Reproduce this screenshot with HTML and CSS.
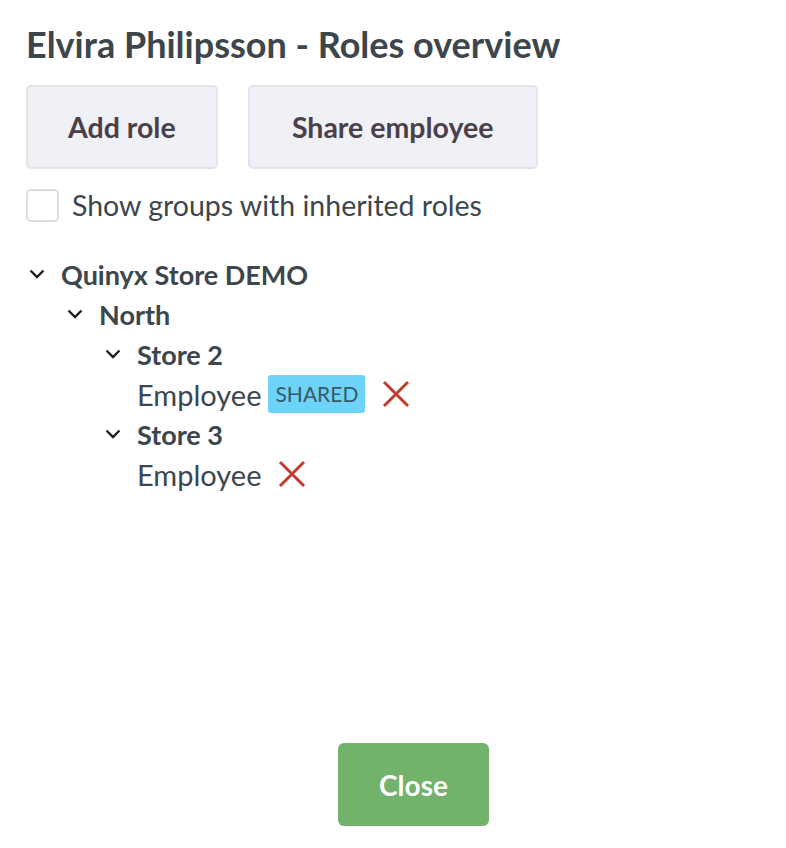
FILE: index.html
```html
<!DOCTYPE html>
<html lang="en">
<head>
    <meta charset="UTF-8">
    <title>Roles overview</title>
    <link rel="stylesheet" href="styles.css">
</head>
<body>
    <div class="page">
        <h1 class="title">Elvira Philipsson - Roles overview</h1>

        <div class="actions">
            <button class="btn">Add role</button>
            <button class="btn btn-share">Share employee</button>
        </div>

        <label class="check-row">
            <span class="checkbox"></span>
            <span>Show groups with inherited roles</span>
        </label>

        <ul class="tree">
            <li>
                <div class="node"><svg class="chev" viewBox="0 0 16 10"><path d="M1.5 1.5 L8 8 L14.5 1.5"/></svg>Quinyx Store DEMO</div>
                <ul>
                    <li>
                        <div class="node"><svg class="chev" viewBox="0 0 16 10"><path d="M1.5 1.5 L8 8 L14.5 1.5"/></svg>North</div>
                        <ul>
                            <li>
                                <div class="node"><svg class="chev" viewBox="0 0 16 10"><path d="M1.5 1.5 L8 8 L14.5 1.5"/></svg>Store 2</div>
                                <div class="role">Employee <span class="badge">SHARED</span>
                                    <svg class="remove" viewBox="0 0 28 28"><path d="M2 2 L26 26 M26 2 L2 26"/></svg>
                                </div>
                            </li>
                            <li>
                                <div class="node"><svg class="chev" viewBox="0 0 16 10"><path d="M1.5 1.5 L8 8 L14.5 1.5"/></svg>Store 3</div>
                                <div class="role">Employee
                                    <svg class="remove" viewBox="0 0 28 28"><path d="M2 2 L26 26 M26 2 L2 26"/></svg>
                                </div>
                            </li>
                        </ul>
                    </li>
                </ul>
            </li>
        </ul>

        <div class="footer">
            <button class="btn-close">Close</button>
        </div>
    </div>
</body>
</html>
```
FILE: styles.css
```css
body{
    margin: 0;
    font-family: Lato, "Open Sans", sans-serif;
    color: #3c464c;
}
.page{
    min-height: 848px;
    box-sizing: border-box;
    padding: 22px 0 22px 26px;
    display: flex;
    flex-direction: column;
}
.title{
    margin: 0;
    font-size: 36px;
    font-weight: 700;
    line-height: 44px;
}
.actions{
    display: flex;
    gap: 30px;
    margin-top: 19px;
}
.btn{
    height: 84px;
    padding: 0 40px;
    background: #f0f1f6;
    border: 2px solid #e3e4e8;
    border-radius: 5px;
    font-family: inherit;
    font-size: 28.5px;
    font-weight: 700;
    color: #4b4049;
}
.btn-share{
    min-width: 290px;
}
.check-row{
    display: flex;
    align-items: center;
    gap: 13px;
    margin-top: 19px;
    font-size: 28.5px;
}
.checkbox{
    width: 29px;
    height: 29px;
    border: 2px solid #dcdcdc;
    border-radius: 5px;
}
.tree, .tree ul{
    list-style: none;
    margin: 0;
    padding: 0;
}
.tree{
    margin-top: 32px;
}
.tree ul{
    padding-left: 38px;
}
.node, .role{
    height: 40px;
    display: flex;
    align-items: center;
}
.node{
    font-size: 27px;
    font-weight: 700;
}
.chev{
    width: 16px;
    height: 10px;
    margin: 0 16px 0 3px;
    fill: none;
    stroke: #1c1c1c;
    stroke-width: 2.4;
}
.role{
    padding-left: 35px;
    font-size: 29px;
}
.badge{
    margin-left: 7px;
    background: #6dd3f9;
    color: #3a5866;
    font-size: 21px;
    border-radius: 3px;
    padding: 6px 7px;
    line-height: 26px;
}
.remove{
    width: 28px;
    height: 28px;
    margin-left: 17px;
    fill: none;
    stroke: #c23b2e;
    stroke-width: 3;
}
.footer{
    margin-top: auto;
    display: flex;
    justify-content: center;
    padding-left: 15px;
}
.btn-close{
    width: 151px;
    height: 83px;
    background: #72b26b;
    border: none;
    border-radius: 6px;
    font-family: inherit;
    font-size: 28px;
    font-weight: 700;
    color: #fff;
}
```
